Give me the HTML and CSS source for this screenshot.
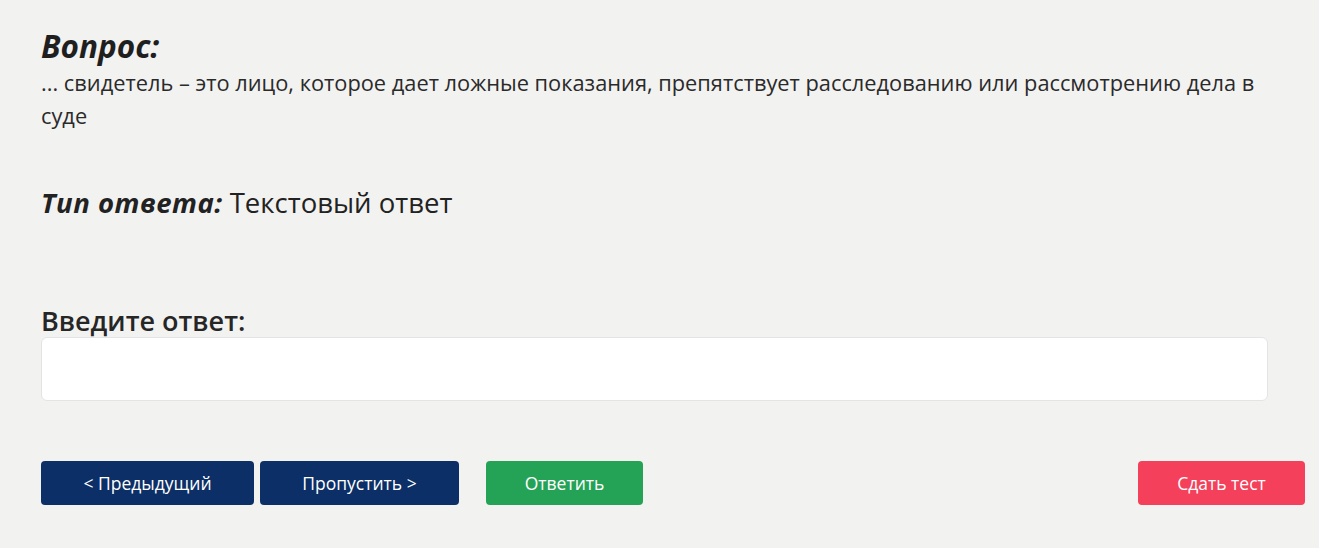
FILE: index.html
```html
<!DOCTYPE html>
<html lang="ru">
<head>
<meta charset="utf-8">
<link rel="stylesheet" href="styles.css">
</head>
<body>
<main class="page">
  <section class="question">
    <h2 class="q-title">Вопрос:</h2>
    <p class="q-text">... свидетель – это лицо, которое дает ложные показания, препятствует расследованию или рассмотрению дела в суде</p>
  </section>
  <p class="type"><span class="type-label">Тип ответа:</span> Текстовый ответ</p>
  <section class="answer">
    <label class="answer-label" for="ans">Введите ответ:</label>
    <input class="answer-input" id="ans" type="text">
  </section>
  <div class="actions">
    <div class="actions-left">
      <button class="btn btn-navy btn-prev">&lt; Предыдущий</button>
      <button class="btn btn-navy btn-skip">Пропустить &gt;</button>
      <button class="btn btn-green btn-answer">Ответить</button>
    </div>
    <button class="btn btn-red btn-submit">Сдать тест</button>
  </div>
</main>
</body>
</html>
```
FILE: styles.css
```css
html, body {
  margin: 0;
  padding: 0;
  background: #f2f2f1;
}
body {
  font-family: "Open Sans", "Noto Sans", sans-serif;
  color: #262626;
}
.page {
  padding: 26px 14px 0 41px;
}
.question {
  width: 1227px;
}
.q-title {
  margin: 0;
  font-size: 31.5px;
  font-style: italic;
  font-weight: 700;
  line-height: 40px;
  color: #1f1f1f;
}
.q-text {
  margin: 0;
  font-size: 21.8px;
  line-height: 33px;
  color: #2a2a2a;
}
.type {
  margin: 51px 0 0 0;
  font-size: 27.5px;
  line-height: 40px;
  color: #222;
}
.type-label {
  font-style: italic;
  font-weight: 700;
  letter-spacing: 0.5px;
}
.answer {
  margin-top: 82px;
  width: 1227px;
  display: flex;
  flex-direction: column;
}
.answer-label {
  font-size: 27px;
  font-weight: 600;
  line-height: 32px;
  color: #262626;
}
.answer-input {
  height: 64px;
  box-sizing: border-box;
  border: 1px solid #e4e4e4;
  border-radius: 6px;
  background: #fff;
  padding: 0 12px;
  font: inherit;
  outline: none;
}
.actions {
  margin-top: 60px;
  display: flex;
  justify-content: space-between;
  align-items: center;
}
.actions-left {
  display: flex;
  gap: 6px;
}
.btn {
  height: 44px;
  border: none;
  border-radius: 4px;
  color: #fff;
  font-family: "Open Sans", "Noto Sans", sans-serif;
  font-size: 17.5px;
  padding: 0;
  cursor: pointer;
}
.btn-navy { background: #0b2f66; }
.btn-green { background: #24a357; }
.btn-red { background: #f4405a; }
.btn-prev { width: 213px; }
.btn-skip { width: 199px; }
.btn-answer { width: 157px; margin-left: 21px; }
.btn-submit { width: 167px; }
```
